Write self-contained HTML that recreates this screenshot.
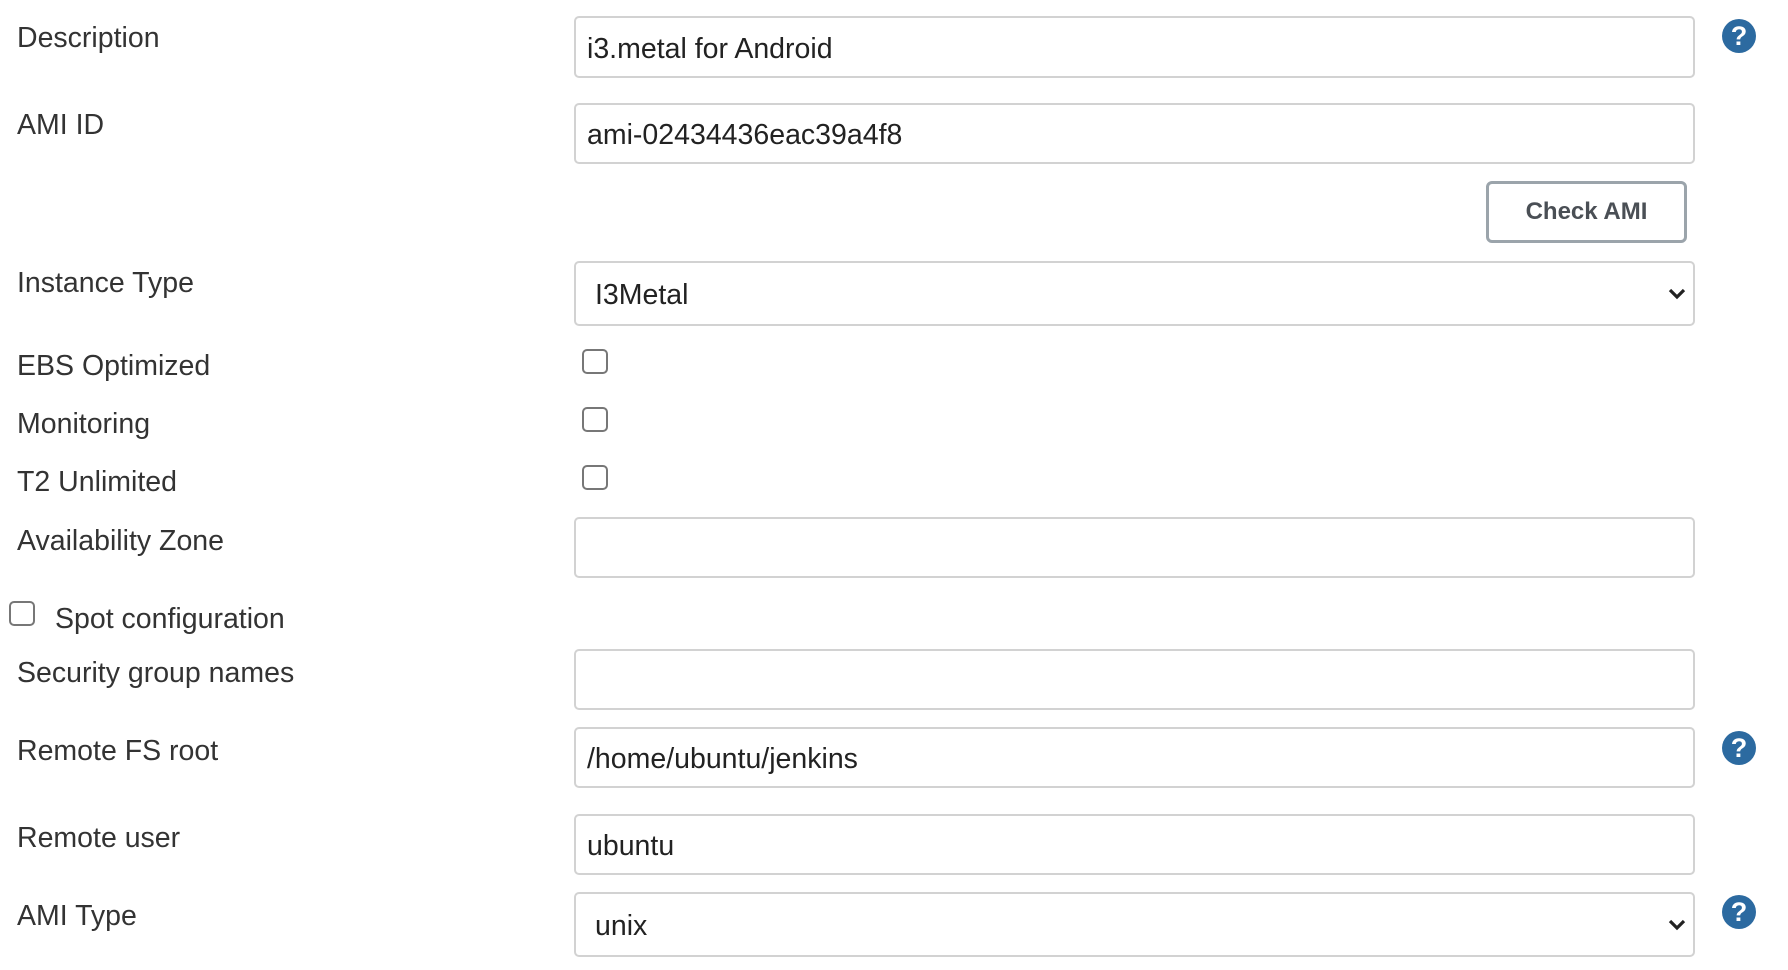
<!DOCTYPE html>
<html><head><meta charset="utf-8"><style>
*{box-sizing:border-box;margin:0;padding:0}
body{width:1788px;height:970px;background:#fff;position:relative;overflow:hidden;font-family:"Liberation Sans",Arial,sans-serif;color:#333}
.l{position:absolute;left:17px;font-size:28.5px;line-height:32px;transform:translateY(-50%)}
.in{position:absolute;left:574px;width:1121px;border:2px solid #d2d2d2;border-radius:5px;background:#fff;font-size:28.5px;padding-left:11px;padding-top:4px;display:flex;align-items:center;color:#222}
.sel{padding-left:19px}
.chev{position:absolute;right:6px;top:50%;margin-top:-8px}
.cb{position:absolute;width:26px;height:25px;border:2px solid #777;border-radius:5px;background:#fff}
.help{position:absolute;left:1722px;width:34px;height:34px;border-radius:50%;background:#2c6aa0;color:#fff;font-weight:bold;font-size:27px;text-align:center;line-height:34px}
.btn{position:absolute;left:1486px;top:181px;width:201px;height:62px;border:3px solid #9ba4ab;border-radius:6px;background:#fff;font-weight:bold;font-size:24px;color:#4a4f55;display:flex;align-items:center;justify-content:center}
</style></head><body>
<div class="l" style="top:38px">Description</div>
<div class="in" style="top:16px;height:62px">i3.metal for Android</div>
<div class="help" style="top:19px">?</div>

<div class="l" style="top:125px">AMI ID</div>
<div class="in" style="top:103px;height:61px">ami-02434436eac39a4f8</div>
<div class="btn">Check AMI</div>

<div class="l" style="top:283px">Instance Type</div>
<div class="in sel" style="top:261px;height:65px">I3Metal<svg class="chev" width="20" height="16" viewBox="0 0 20 16"><path d="M3 4l7 7 7-7" stroke="#222" stroke-width="3.2" fill="none"/></svg></div>

<div class="l" style="top:366px">EBS Optimized</div>
<div class="cb" style="left:582px;top:349px"></div>
<div class="l" style="top:424px">Monitoring</div>
<div class="cb" style="left:582px;top:407px"></div>
<div class="l" style="top:482px">T2 Unlimited</div>
<div class="cb" style="left:582px;top:465px"></div>

<div class="l" style="top:541px">Availability Zone</div>
<div class="in" style="top:517px;height:61px"></div>

<div class="cb" style="left:9px;top:601px"></div>
<div class="l" style="top:619px;left:55px">Spot configuration</div>

<div class="l" style="top:673px">Security group names</div>
<div class="in" style="top:649px;height:61px"></div>

<div class="l" style="top:751px">Remote FS root</div>
<div class="in" style="top:727px;height:61px">/home/ubuntu/jenkins</div>
<div class="help" style="top:731px">?</div>

<div class="l" style="top:838px">Remote user</div>
<div class="in" style="top:814px;height:61px">ubuntu</div>

<div class="l" style="top:916px">AMI Type</div>
<div class="in sel" style="top:892px;height:65px">unix<svg class="chev" width="20" height="16" viewBox="0 0 20 16"><path d="M3 4l7 7 7-7" stroke="#222" stroke-width="3.2" fill="none"/></svg></div>
<div class="help" style="top:895px">?</div>
</body></html>
